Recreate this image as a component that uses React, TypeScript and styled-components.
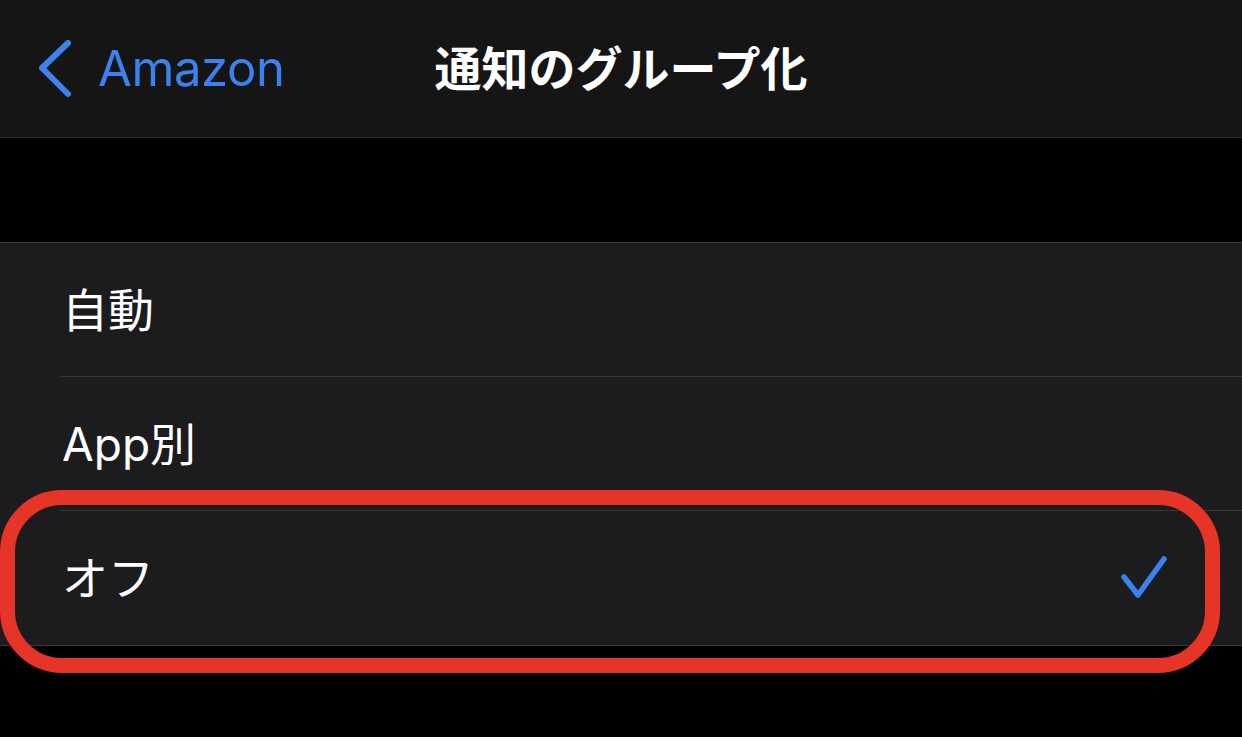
import styled, { createGlobalStyle } from 'styled-components';

const GlobalStyle = createGlobalStyle`
  html, body {
    margin: 0;
    padding: 0;
    background: #000;
  }
  body {
    font-family: Inter, 'Noto Sans CJK JP', sans-serif;
    -webkit-font-smoothing: antialiased;
  }
`;

const Screen = styled.div`
  width: 1242px;
  height: 737px;
  background: #000;
  overflow: hidden;
  display: flex;
  flex-direction: column;
`;

const NavBar = styled.header`
  height: 137px;
  flex-shrink: 0;
  background: #151515;
  border-bottom: 1px solid #2c2c2e;
  display: grid;
  grid-template-columns: 1fr auto 1fr;
  align-items: center;
`;

const BackButton = styled.div`
  display: flex;
  align-items: center;
  gap: 24px;
  padding-left: 38px;
  color: #3b82f0;
  font-family: Inter, 'Noto Sans CJK JP', sans-serif;
  font-size: 49px;
  font-weight: 400;
  letter-spacing: -0.4px;
`;

const Title = styled.h1`
  margin: 0 0 6px;
  color: #fff;
  font-family: 'Noto Sans CJK JP', sans-serif;
  font-size: 47px;
  font-weight: 700;
`;

const Spacer = styled.div`
  height: 104px;
  flex-shrink: 0;
`;

const Group = styled.ul`
  margin: 0;
  padding: 0;
  list-style: none;
  background: #1c1c1e;
  border-top: 1px solid #38383a;
  border-bottom: 1px solid #38383a;
`;

const Row = styled.li<{ $last?: boolean }>`
  position: relative;
  height: 134px;
  padding-left: 62px;
  padding-right: 74px;
  display: flex;
  align-items: center;
  justify-content: space-between;
  color: #fff;
  font-family: Inter, 'Noto Sans CJK JP', sans-serif;
  font-size: 46px;
  font-weight: 400;

  &::after {
    content: '';
    display: ${(p) => (p.$last ? 'none' : 'block')};
    position: absolute;
    left: 60px;
    right: 0;
    bottom: 0;
    height: 1px;
    background: #38383a;
  }
`;

const Label = styled.span`
  line-height: 1;
`;

const Highlight = styled.div`
  position: absolute;
  left: 0;
  top: -21px;
  right: 22px;
  bottom: -28px;
  border: 15px solid #e63427;
  border-radius: 62px;
  pointer-events: none;
`;

const ChevronLeft = () => (
  <svg width="36" height="58" viewBox="0 0 36 58" fill="none">
    <path
      d="M30 3 L4 28 L30 54"
      stroke="#3b82f0"
      strokeWidth="6"
      strokeLinecap="round"
      strokeLinejoin="round"
    />
  </svg>
);

const Check = () => (
  <svg width="48" height="46" viewBox="0 0 48 46" fill="none">
    <path
      d="M4 22 L18 40 L44 4"
      stroke="#3b82f0"
      strokeWidth="5.5"
      strokeLinecap="round"
      strokeLinejoin="round"
    />
  </svg>
);

const options = [
  { id: 'auto', label: '自動' },
  { id: 'app', label: 'App別' },
  { id: 'off', label: 'オフ' },
];

const selected = 'off';

export default function App() {
  return (
    <>
      <GlobalStyle />
      <Screen>
        <NavBar>
          <BackButton>
            <ChevronLeft />
            <span>Amazon</span>
          </BackButton>
          <Title>通知のグループ化</Title>
          <div />
        </NavBar>
        <Spacer />
        <Group>
          {options.map((o, i) => (
            <Row key={o.id} $last={i === options.length - 1}>
              <Label>{o.label}</Label>
              {o.id === selected && <Check />}
              {o.id === selected && <Highlight />}
            </Row>
          ))}
        </Group>
      </Screen>
    </>
  );
}
